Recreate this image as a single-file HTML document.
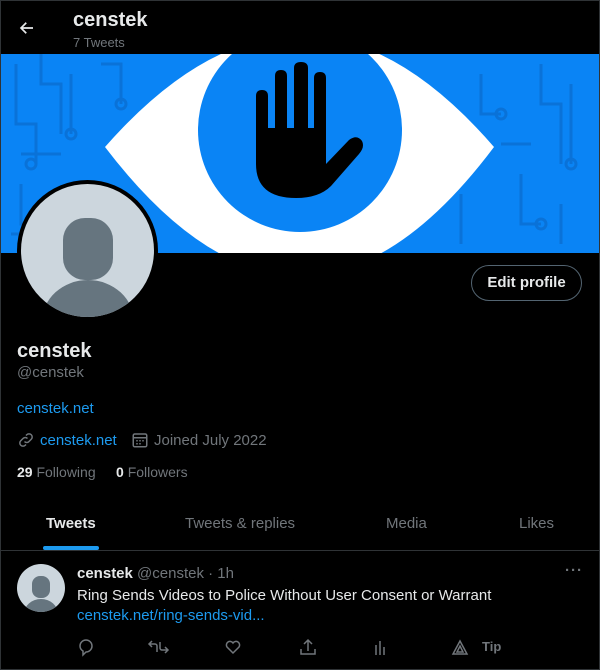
<!DOCTYPE html>
<html><head><meta charset="utf-8"><style>
*{margin:0;padding:0;box-sizing:border-box}
body{width:600px;height:670px;background:#000;font-family:"Liberation Sans",Arial,sans-serif;color:#e7e9ea;overflow:hidden;position:relative}
.frame{position:absolute;inset:0;border:1px solid #2f3336;pointer-events:none;z-index:10}
.abs{position:absolute}
.g{color:#71767b}
.b{color:#1d9bf0}
</style></head><body>
<div class="frame"></div>
<svg class="abs" style="left:18px;top:19px" width="18" height="18" viewBox="0 0 24 24"><path d="M20 12H5M11 5l-7 7 7 7" stroke="#e7e9ea" stroke-width="2.2" fill="none"/></svg>
<div class="abs" style="left:73px;top:9px;font-size:20px;font-weight:bold">censtek</div>
<div class="abs g" style="left:73px;top:35px;font-size:13px">7 Tweets</div>

<svg class="abs" style="left:1px;top:54px" width="598" height="199" viewBox="0 0 598 199">
<rect width="598" height="199" fill="#0a84f5"/>
<g stroke="#0a72d8" stroke-width="3" fill="none">
<path d="M15 10v60h20v40M40 0v30h20v50M70 20v60M100 10h20v40M20 130v40h30M60 150v49M540 10v40h20v60M570 30v80M520 120v50h20M560 150v40M480 20v40h20M500 90h30M460 140v50M120 150v40h20M20 100h40M10 180h30"/>
<circle cx="30" cy="110" r="5"/><circle cx="70" cy="80" r="5"/><circle cx="120" cy="50" r="5"/><circle cx="540" cy="170" r="5"/><circle cx="570" cy="110" r="5"/><circle cx="500" cy="60" r="5"/>
</g>
<path d="M104 93 Q300 -130 493 93 Q300 350 104 93Z" fill="#fff"/>
<circle cx="299" cy="76" r="102" fill="#0a84f5"/>
<path d="M255 42 Q255 36 261 36 Q267 36 267 42 L267 74 L274 74 L274 22 Q274 16 280 16 Q286 16 286 22 L286 74 L293 74 L293 14 Q293 8 300 8 Q307 8 307 14 L307 74 L313 74 L313 24 Q313 18 319 18 Q325 18 325 24 L325 110 L348 86 Q356 80 361 87 Q364 93 358 100 L330 132 Q318 144 295 144 Q255 144 255 110Z" fill="#000"/>
</svg>

<div class="abs" style="left:17px;top:180px;width:141px;height:141px;border-radius:50%;background:#000;padding:4px">
<svg width="133" height="133" viewBox="0 0 133 133" style="border-radius:50%;display:block"><rect width="133" height="133" fill="#ccd6dd"/><rect x="42" y="34" width="50" height="62" rx="22" fill="#66757f"/><ellipse cx="67" cy="138" rx="46" ry="42" fill="#66757f"/></svg>
</div>

<div class="abs" style="left:471px;top:265px;width:111px;height:36px;border:1px solid #536471;border-radius:18px;font-size:15px;font-weight:bold;text-align:center;line-height:34px">Edit profile</div>

<div class="abs" style="left:17px;top:340px;font-size:20px;font-weight:bold">censtek</div>
<div class="abs g" style="left:17px;top:364px;font-size:15px">@censtek</div>
<div class="abs b" style="left:17px;top:400px;font-size:15px">censtek.net</div>
<svg class="abs" style="left:17px;top:431px" width="18" height="18" viewBox="0 0 24 24" fill="none" stroke="#71767b" stroke-width="2"><path d="M10 14a4 4 0 0 0 6 0l3-3a4 4 0 0 0-6-6l-1 1M14 10a4 4 0 0 0-6 0l-3 3a4 4 0 0 0 6 6l1-1"/></svg>
<div class="abs b" style="left:40px;top:432px;font-size:15px">censtek.net</div>
<svg class="abs" style="left:131px;top:431px" width="18" height="18" viewBox="0 0 24 24" fill="none" stroke="#71767b" stroke-width="2"><rect x="3" y="4" width="18" height="17" rx="2"/><path d="M3 9h18M7 13h2M11 13h2M15 13h2M7 17h2M11 17h2"/></svg>
<div class="abs g" style="left:154px;top:432px;font-size:15px">Joined July 2022</div>
<div class="abs" style="left:17px;top:464px;font-size:14px"><b>29</b> <span class="g">Following</span></div>
<div class="abs" style="left:116px;top:464px;font-size:14px"><b>0</b> <span class="g">Followers</span></div>

<div class="abs" style="left:46px;top:515px;font-size:15px;font-weight:bold">Tweets</div>
<div class="abs" style="left:43px;top:546px;width:56px;height:4px;border-radius:2px;background:#1d9bf0"></div>
<div class="abs g" style="left:185px;top:515px;font-size:15px">Tweets &amp; replies</div>
<div class="abs g" style="left:386px;top:515px;font-size:15px">Media</div>
<div class="abs g" style="left:519px;top:515px;font-size:15px">Likes</div>
<div class="abs" style="left:0;top:550px;width:600px;height:1px;background:#2f3336"></div>

<svg class="abs" style="left:17px;top:564px" width="48" height="48" viewBox="0 0 48 48"><clipPath id="c"><circle cx="24" cy="24" r="24"/></clipPath><circle cx="24" cy="24" r="24" fill="#ccd6dd"/><g clip-path="url(#c)" fill="#66757f"><rect x="15" y="12" width="18" height="22" rx="8"/><ellipse cx="24" cy="50" rx="17" ry="15"/></g></svg>
<div class="abs" style="left:77px;top:565px;font-size:15px"><b>censtek</b> <span class="g">@censtek · 1h</span></div>
<div class="abs g" style="left:565px;top:562px;font-size:15px;font-weight:bold;letter-spacing:1px">···</div>
<div class="abs" style="left:77px;top:587px;font-size:15px">Ring Sends Videos to Police Without User Consent or Warrant</div>
<div class="abs b" style="left:77px;top:607px;font-size:15px">censtek.net/ring-sends-vid...</div>
<svg class="abs" style="left:76px;top:637px" width="420" height="20" viewBox="0 0 420 20" fill="none" stroke="#71767b" stroke-width="1.5">
<path d="M4 9a6 6 0 1 1 6 6l-3 3v-4a6 6 0 0 1-3-5z"/>
<path d="M76 4l-3 3 3 3M73 7h6a2 2 0 0 1 2 2v6M89 16l3-3-3-3M92 13h-6a2 2 0 0 1-2-2V5"/>
<path d="M157 16l-6-6a3.5 3.5 0 0 1 6-4 3.5 3.5 0 0 1 6 4z"/>
<path d="M232 3v11M228 7l4-4 4 4M225 12v5h14v-5"/>
<path d="M300 8v10M304 4v14M308 10v8"/>
<path d="M384 4l7 13h-14z M384 9l3 6h-6z"/>
</svg>
<div class="abs g" style="left:482px;top:639px;font-size:13px;font-weight:bold">Tip</div>
</body></html>
